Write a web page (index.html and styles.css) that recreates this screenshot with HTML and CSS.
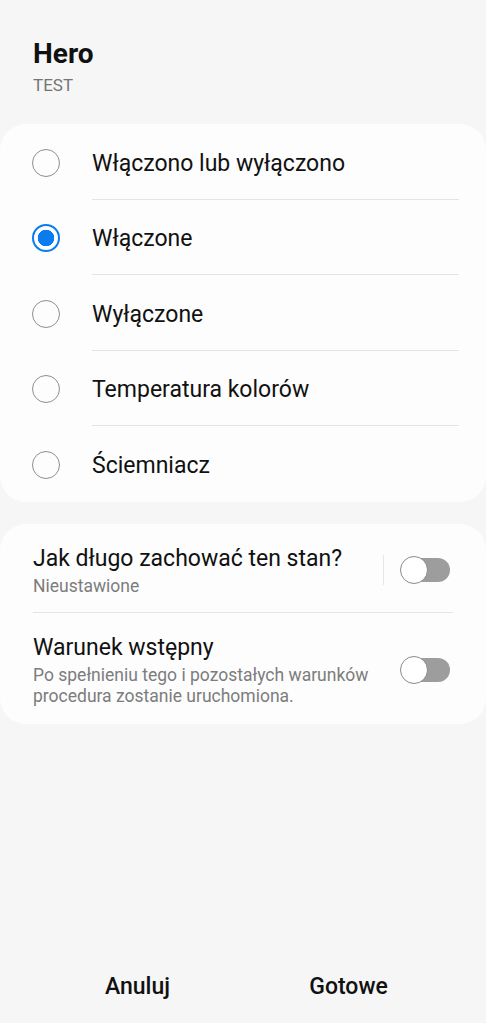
FILE: index.html
```html
<!DOCTYPE html>
<html lang="pl">
<head>
    <meta charset="UTF-8">
    <meta name="viewport" content="width=device-width, initial-scale=1.0">
    <title>Hero</title>
    <link rel="stylesheet" href="styles.css">
</head>
<body>
    <div class="screen">
        <div class="header">
            <h1>Hero</h1>
            <p class="subtitle">TEST</p>
        </div>

        <div class="card options">
            <label class="option">
                <input type="radio" name="state" value="any">
                <span class="option-text">Włączono lub wyłączono</span>
            </label>
            <label class="option">
                <input type="radio" name="state" value="on" checked>
                <span class="option-text">Włączone</span>
            </label>
            <label class="option">
                <input type="radio" name="state" value="off">
                <span class="option-text">Wyłączone</span>
            </label>
            <label class="option">
                <input type="radio" name="state" value="temp">
                <span class="option-text">Temperatura kolorów</span>
            </label>
            <label class="option">
                <input type="radio" name="state" value="dim">
                <span class="option-text">Ściemniacz</span>
            </label>
        </div>

        <div class="card settings">
            <div class="setting first">
                <div class="setting-text">
                    <div class="setting-title">Jak długo zachować ten stan?</div>
                    <div class="setting-sub">Nieustawione</div>
                </div>
                <span class="vline"></span>
                <label class="switch">
                    <input type="checkbox">
                    <span class="track"></span>
                </label>
            </div>
            <div class="setting">
                <div class="setting-text">
                    <div class="setting-title">Warunek wstępny</div>
                    <div class="setting-sub">Po spełnieniu tego i pozostałych warunków procedura zostanie uruchomiona.</div>
                </div>
                <label class="switch">
                    <input type="checkbox">
                    <span class="track"></span>
                </label>
            </div>
        </div>

        <div class="spacer"></div>

        <div class="actions">
            <button class="action">Anuluj</button>
            <button class="action">Gotowe</button>
        </div>
    </div>
</body>
</html>
```

FILE: styles.css
```css
body {
    margin: 0;
    font-family: Roboto, "Liberation Sans", sans-serif;
    background-color: #f6f6f6;
    color: #111;
}
.screen {
    height: 1023px;
    display: flex;
    flex-direction: column;
}
.header {
    padding: 37px 33px 0;
}
.header h1 {
    margin: 0;
    font-size: 28px;
    font-weight: 700;
    line-height: 34px;
}
.subtitle {
    margin: 3px 0 0;
    font-size: 17px;
    line-height: 22px;
    color: #747474;
}
.card {
    background-color: #fdfdfd;
    border-radius: 26px;
}
.options {
    margin-top: 28px;
    padding: 0 27px 0 32px;
}
.option {
    display: flex;
    align-items: stretch;
    height: 75.5px;
    cursor: pointer;
}
.option input[type="radio"] {
    appearance: none;
    margin: 2px 32px 0 0;
    align-self: center;
    width: 28px;
    height: 28px;
    border: 1.5px solid #8e8e8e;
    border-radius: 50%;
    box-sizing: border-box;
    flex-shrink: 0;
}
.option input[type="radio"]:checked {
    border: 2px solid #0a7cf0;
    background: radial-gradient(circle, #0a7cf0 0 8px, transparent 8.5px);
}
.option-text {
    flex: 1;
    display: flex;
    align-items: center;
    padding-top: 4px;
    font-size: 23px;
    border-bottom: 1px solid #e4e4e4;
}
.option:last-child .option-text {
    border-bottom: none;
}
.settings {
    margin-top: 22px;
    padding: 0 33px;
}
.setting {
    display: flex;
    align-items: center;
    padding: 20px 0 17px;
}
.setting.first {
    height: 89px;
    box-sizing: border-box;
    padding: 5px 0 0;
    border-bottom: 1px solid #e4e4e4;
}
.setting-text {
    flex: 1;
}
.setting-title {
    font-size: 23px;
    line-height: 30px;
}
.setting-sub {
    font-size: 17.5px;
    line-height: 21px;
    color: #7c7c7c;
    margin-top: 2px;
    max-width: 350px;
}
.vline {
    width: 1px;
    height: 30px;
    background-color: #e6e6e6;
    margin: 0 16px 0 10px;
}
.switch {
    position: relative;
    width: 50px;
    height: 28px;
    flex-shrink: 0;
    margin-right: 3px;
}
.switch input {
    display: none;
}
.track {
    position: absolute;
    left: 4px;
    right: 0;
    top: 2px;
    bottom: 2px;
    border-radius: 12px;
    background-color: #9d9d9d;
}
.track::before {
    content: "";
    position: absolute;
    left: -4px;
    top: -2px;
    width: 28px;
    height: 28px;
    box-sizing: border-box;
    border: 1.5px solid #8a8a8a;
    border-radius: 50%;
    background-color: #fff;
}
.spacer {
    flex: 1;
}
.actions {
    display: flex;
    padding: 0 32px;
}
.action {
    flex: 1;
    height: 74px;
    border: none;
    background: none;
    font-family: Roboto, "Liberation Sans", sans-serif;
    font-size: 23px;
    font-weight: 500;
    color: #111;
}
```
